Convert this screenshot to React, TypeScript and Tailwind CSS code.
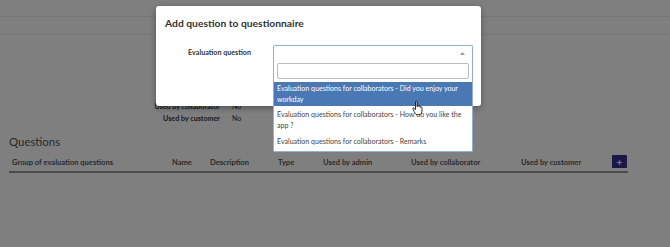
const font = { fontFamily: 'Lato, "Noto Sans", sans-serif' };

const headers = [
  { label: 'Group of evaluation questions', w: 'w-[160px]' },
  { label: 'Name', w: 'w-[38px]' },
  { label: 'Description', w: 'w-[68px]' },
  { label: 'Type', w: 'w-[45px]' },
  { label: 'Used by admin', w: 'w-[88px]' },
  { label: 'Used by collaborator', w: 'w-[110px]' },
  { label: 'Used by customer', w: 'w-[92px]' },
];

// lines as they wrap in the dropdown
const options = [
  ['Evaluation questions for collaborators - Did you enjoy your', 'workday'],
  ['Evaluation questions for collaborators - How do you like the', 'app ?'],
  ['Evaluation questions for collaborators - Remarks'],
];

function HandCursor() {
  return (
    <svg width="12" height="16" viewBox="0 0 12 16" className="absolute left-[412px] top-[100px] z-20">
      <path
        d="M3.5 1.6 Q4.25 0.6 5 1.6 V6.6 H5.4 V5.6 Q6.2 4.9 7 5.6 V6.6 Q7.75 5.9 8.5 6.6 V7.3 Q9.3 6.7 10 7.4 V11 Q10 13.6 8 14.6 H4.6 Q3.1 13.6 2.1 11.6 L0.9 8.9 Q0.7 7.9 1.7 7.9 L3.5 9.6 Z"
        fill="white"
        stroke="black"
        strokeWidth="0.8"
        strokeLinejoin="round"
      />
    </svg>
  );
}

export default function App() {
  return (
    <div className="relative w-[670px] h-[247px] overflow-hidden bg-white" style={font}>
      {/* page behind the modal */}
      <div className="h-[17px] border-b border-[#eeeeee]" />
      <div className="h-[18px] border-b border-[#eeeeee]" />
      <div className="h-[66px]" />
      <div className="grid grid-cols-[220px_1fr] gap-x-3 text-[7.15px] text-[#333] leading-[12px]">
        <span className="text-right font-bold">Used by collaborator</span>
        <span>No</span>
        <span className="text-right font-bold">Used by customer</span>
        <span>No</span>
      </div>
      <h2 className="mt-[8px] ml-[9px] text-[11.4px] leading-[18px] text-[#555]">Questions</h2>
      <div className="ml-[9px] mt-[3px] w-[619px] flex items-center h-[19px] border-b-2 border-[#999] text-[7.55px] font-bold text-[#555] pl-[2px]">
        {headers.map((h) => (
          <div key={h.label} className={`${h.w} shrink-0 px-[1px]`}>
            {h.label}
          </div>
        ))}
        <div className="ml-auto mr-[1px] mb-[2px] w-[15px] h-[13px] rounded-[1px] bg-[#36308d] text-white flex items-center justify-center text-[10px] leading-none">
          +
        </div>
      </div>

      {/* overlay */}
      <div className="absolute inset-0 bg-black/50" />

      {/* modal */}
      <div className="absolute left-[156px] top-[6px] w-[325px] h-[100px] rounded-[3px] bg-white shadow-[0_2px_6px_rgba(0,0,0,0.35)]">
        <div className="px-[9px] pt-[10px] text-[10.3px] font-bold text-[#333] leading-[14px]">
          Add question to questionnaire
        </div>
        <div className="flex mt-[15px]">
          <div className="w-[117px] text-right pr-[22px] pt-[2px] text-[7.15px] font-bold text-[#333] leading-[11px]">
            Evaluation question
          </div>
          <div className="relative w-[200px]">
            <div className="h-[16px] rounded-t-[2px] border border-[#8fb0d8] border-b-0 bg-white flex items-center justify-end pr-[7px]">
              <svg width="5" height="3" viewBox="0 0 5 3">
                <path d="M0 3 L2.5 0 L5 3 Z" fill="#999" />
              </svg>
            </div>
            <div className="absolute left-0 top-[16px] w-[200px] border border-[#8fb0d8] border-t-0 rounded-b-[2px] bg-white z-10">
              <div className="px-[3px] pt-[2px] pb-[3px]">
                <div className="h-[16px] rounded-[2px] border border-[#bbbbbb]" />
              </div>
              <div className="text-[7.05px] leading-[11px] text-[#444]">
                {options.map((o, i) => (
                  <div
                    key={o[0]}
                    className={
                      i === 0
                        ? 'bg-[#4a78b5] text-white px-[3px] py-[1px]'
                        : i === options.length - 1
                          ? 'px-[3px] pt-[3px] pb-[4px]'
                          : 'px-[3px] pt-[3px] pb-[2px]'
                    }
                  >
                    {o.map((line) => (
                      <div key={line} className="whitespace-nowrap">
                        {line}
                      </div>
                    ))}
                  </div>
                ))}
              </div>
            </div>
          </div>
        </div>
      </div>
      <HandCursor />
    </div>
  );
}
